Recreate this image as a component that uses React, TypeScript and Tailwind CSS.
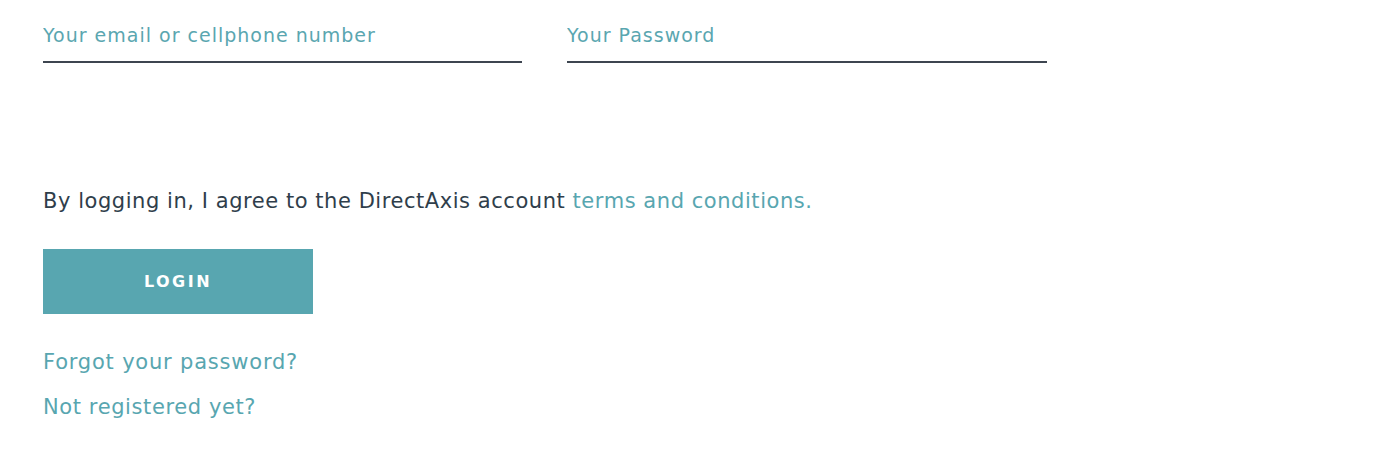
import React from "react";

export default function App() {
  return (
    <div className="min-h-[449px] w-full bg-white px-[43px] pt-[22px] font-['DejaVu_Sans',sans-serif]">
      <div className="flex gap-[45px]">
        <div className="w-[479px] border-b-2 border-[#3d4550] pb-[12px]">
          <input
            className="w-full bg-transparent text-[19px] leading-[27px] tracking-[1px] text-[#5aa6b0] outline-none placeholder:text-[#5aa6b0]"
            placeholder="Your email or cellphone number"
          />
        </div>
        <div className="w-[480px] border-b-2 border-[#3d4550] pb-[12px]">
          <input
            type="password"
            className="w-full bg-transparent text-[19px] leading-[27px] tracking-[1px] text-[#5aa6b0] outline-none placeholder:text-[#5aa6b0]"
            placeholder="Your Password"
          />
        </div>
      </div>
      <p className="mt-[124px] text-[21px] leading-[28px] tracking-[0.55px] text-[#2f3e4b]">
        By logging in, I agree to the DirectAxis account{" "}
        <a className="text-[#58a6b0]">terms and conditions.</a>
      </p>
      <button className="mt-[34px] flex h-[65px] w-[270px] items-center justify-center bg-[#58a6b0] text-[16px] font-bold tracking-[2.5px] text-white">
        LOGIN
      </button>
      <div className="mt-[34px] text-[21px] leading-[28px] tracking-[0.8px] text-[#58a6b0]">Forgot your password?</div>
      <div className="mt-[17px] text-[21px] leading-[28px] tracking-[0.6px] text-[#58a6b0]">Not registered yet?</div>
    </div>
  );
}
